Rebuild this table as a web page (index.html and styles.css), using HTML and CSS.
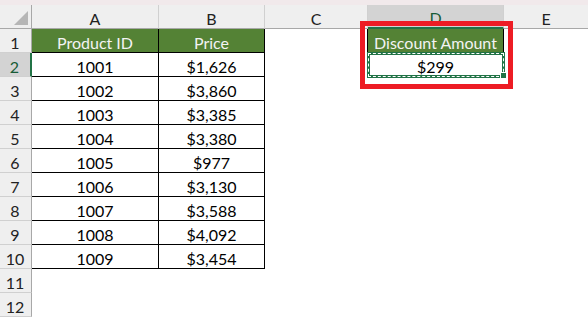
FILE: index.html
```html
<!DOCTYPE html>
<html>
<head>
<meta charset="utf-8">
<link rel="stylesheet" href="styles.css">
</head>
<body>
<div class="page">
  <div class="strip"></div>
  <div class="sheet">
    <div class="h corner"><span class="tri"></span></div>
    <div class="h col">A</div>
    <div class="h col">B</div>
    <div class="h col">C</div>
    <div class="h col sel-col">D</div>
    <div class="h col last">E</div>

    <div class="h row">1</div>
    <div class="c t head">Product ID</div>
    <div class="c t head">Price</div>
    <div class="c bl"></div>
    <div class="c head dhead">Discount Amount</div>
    <div class="c"></div>

    <div class="h row sel-row">2</div>
    <div class="c t">1001</div>
    <div class="c t">$1,626</div>
    <div class="c"></div>
    <div class="c active">$299<span class="handle"></span></div>
    <div class="c"></div>

    <div class="h row">3</div>
    <div class="c t">1002</div>
    <div class="c t">$3,860</div>
    <div class="c"></div><div class="c"></div><div class="c"></div>

    <div class="h row">4</div>
    <div class="c t">1003</div>
    <div class="c t">$3,385</div>
    <div class="c"></div><div class="c"></div><div class="c"></div>

    <div class="h row">5</div>
    <div class="c t">1004</div>
    <div class="c t">$3,380</div>
    <div class="c"></div><div class="c"></div><div class="c"></div>

    <div class="h row">6</div>
    <div class="c t">1005</div>
    <div class="c t">$977</div>
    <div class="c"></div><div class="c"></div><div class="c"></div>

    <div class="h row">7</div>
    <div class="c t">1006</div>
    <div class="c t">$3,130</div>
    <div class="c"></div><div class="c"></div><div class="c"></div>

    <div class="h row">8</div>
    <div class="c t">1007</div>
    <div class="c t">$3,588</div>
    <div class="c"></div><div class="c"></div><div class="c"></div>

    <div class="h row">9</div>
    <div class="c t">1008</div>
    <div class="c t">$4,092</div>
    <div class="c"></div><div class="c"></div><div class="c"></div>

    <div class="h row">10</div>
    <div class="c t">1009</div>
    <div class="c t">$3,454</div>
    <div class="c"></div><div class="c"></div><div class="c"></div>

    <div class="h row">11</div>
    <div class="c"></div><div class="c"></div><div class="c"></div><div class="c"></div><div class="c"></div>

    <div class="h row">12</div>
    <div class="c"></div><div class="c"></div><div class="c"></div><div class="c"></div><div class="c"></div>
  </div>
  <div class="callout"></div>
</div>
</body>
</html>
```

FILE: styles.css
```css
html, body {
  margin: 0;
  padding: 0;
  background: #ffffff;
}
.page {
  position: relative;
  width: 588px;
  height: 318px;
  overflow: hidden;
  font-family: Lato, "Noto Sans", sans-serif;
  font-size: 16px;
  color: #000;
}
.strip {
  height: 5px;
  background: #f1e9eb;
}
.sheet {
  display: grid;
  grid-template-columns: 32px 127px 106px 103px 136px 84px;
  grid-template-rows: repeat(13, 24px);
}
.sheet > div {
  box-sizing: border-box;
  border-right: 1px solid transparent;
  border-bottom: 1px solid transparent;
  display: flex;
  align-items: flex-end;
  justify-content: center;
  line-height: 19px;
  white-space: nowrap;
}
.h {
  background: #efefef;
  color: #222;
}
.col {
  border-right-color: #d0d0d0 !important;
  border-bottom-color: #a8a8a8 !important;
}
.col.last {
  border-right: none !important;
}
.row {
  border-right-color: #a8a8a8 !important;
  border-bottom-color: #d0d0d0 !important;
  padding-right: 1px;
}
.corner {
  position: relative;
  border-bottom-color: #a8a8a8 !important;
  border-right-color: #a8a8a8 !important;
}
.tri {
  position: absolute;
  right: 3px;
  bottom: 3px;
  width: 0;
  height: 0;
  border-left: 14px solid transparent;
  border-bottom: 14px solid #b6b6b6;
}
.sel-col {
  background: #d3d3d3;
  border-bottom: 2px solid #217346 !important;
  color: #185c37;
}
.sel-row {
  background: #d3d3d3;
  border-right: 2px solid #217346 !important;
  color: #185c37;
}
.t {
  border-right-color: #000 !important;
  border-bottom-color: #000 !important;
}
.bl {
  border-right-color: #000 !important;
}
.head {
  background: #548235;
  color: #f3f3f3;
}
.dhead {
  border-right-color: #000 !important;
  border-bottom-color: #1d5a35 !important;
}
.active {
  position: relative;
}
.active::before {
  content: "";
  position: absolute;
  left: -1px;
  top: -1px;
  right: -2px;
  bottom: -2px;
  border: 3px solid #217346;
}
.active::after {
  content: "";
  position: absolute;
  left: 0;
  top: 0;
  right: -1px;
  bottom: -1px;
  border: 1px dashed #ffffff;
}
.handle {
  position: absolute;
  right: -4px;
  bottom: -3px;
  width: 5px;
  height: 5px;
  background: #217346;
  border: 1px solid #ffffff;
  z-index: 2;
}
.callout {
  position: absolute;
  left: 360px;
  top: 21px;
  width: 153px;
  height: 68px;
  box-sizing: border-box;
  border: 5px solid #ed1c24;
}
```
